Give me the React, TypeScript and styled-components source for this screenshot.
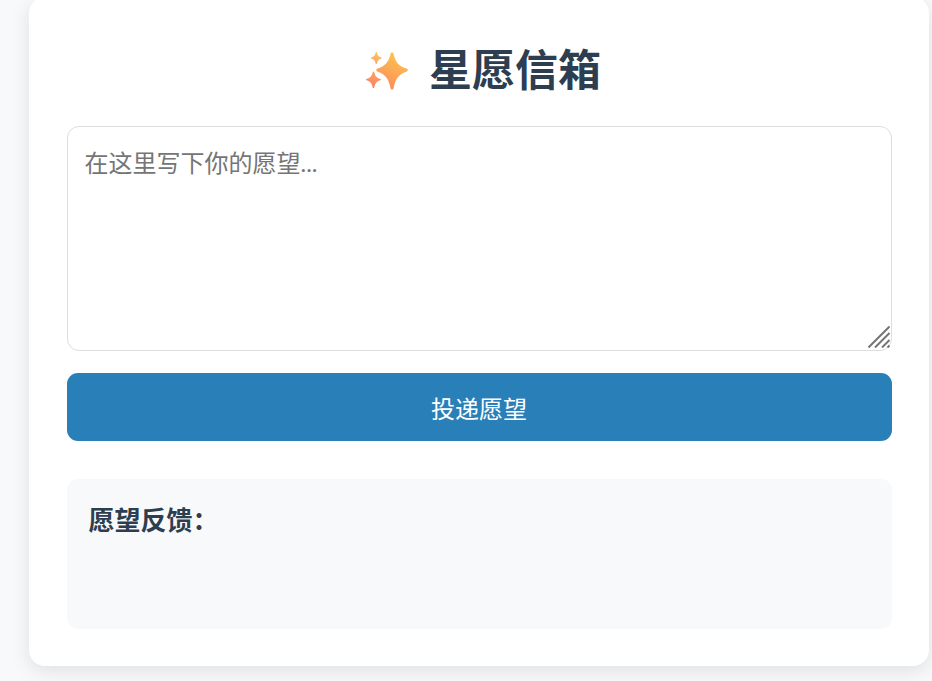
import React from "react";
import styled, { createGlobalStyle } from "styled-components";

const Global = createGlobalStyle`
  html, body { margin: 0; padding: 0; height: 100%; overflow: hidden; background: #f8f9fa; }
  body { font-family: "Liberation Sans", "Noto Sans CJK SC", sans-serif; }
`;

const Page = styled.div`
  height: 681px;
  overflow: hidden;
  padding-left: 29px;
  box-sizing: border-box;
`;

const Card = styled.main`
  width: 900px;
  height: 669px;
  margin-top: -3px;
  padding: 3px 37.5px 0;
  box-sizing: border-box;
  background: #fff;
  border-radius: 16px;
  box-shadow: 0 5px 20px rgba(0, 0, 0, 0.1);
`;

const Title = styled.h1`
  display: flex;
  align-items: center;
  justify-content: center;
  gap: 21px;
  height: 72px;
  margin: 35px 0 19px;
  padding-left: 8px;
  font-size: 43px;
  line-height: 72px;
  font-weight: 700;
  color: #2c3e50;
`;

const Sparkle = styled.svg`
  width: 43px;
  height: 39px;
  flex: none;
`;

const FieldWrap = styled.div`
  position: relative;
  height: 225px;
`;

const WishInput = styled.textarea`
  display: block;
  width: 100%;
  height: 100%;
  box-sizing: border-box;
  padding: 18px 17px;
  border: 1px solid #ddd;
  border-radius: 12px;
  resize: none;
  outline: none;
  background: #fff;
  font-family: Lato, "Noto Sans CJK SC", sans-serif;
  font-size: 24px;
  line-height: 36px;
  color: #333;
  &::placeholder { color: #757575; opacity: 1; }
`;

const Grip = styled.svg`
  position: absolute;
  right: 2px;
  bottom: 3px;
  width: 22px;
  height: 22px;
  pointer-events: none;
`;

const Submit = styled.button`
  display: block;
  width: 100%;
  height: 68px;
  margin-top: 22px;
  border: 0;
  border-radius: 11px;
  background: #2980b9;
  color: #fff;
  font-family: "Liberation Sans", "Noto Sans CJK SC", sans-serif;
  font-size: 24px;
`;

const Feedback = styled.section`
  height: 150px;
  margin-top: 38px;
  padding: 23px 22px 0;
  box-sizing: border-box;
  background: #f8f9fa;
  border-radius: 11px;
`;

const FeedbackTitle = styled.h3`
  margin: 0;
  font-size: 26px;
  line-height: 38px;
  font-weight: 700;
  color: #2c3e50;
`;

export default function App() {
  return (
    <Page>
      <Global />
      <Card>
        <Title>
          <Sparkle viewBox="0 0 46 42" aria-hidden="true">
            <defs>
              <linearGradient id="big" x1="0.7" y1="0" x2="0.3" y2="1">
                <stop offset="0" stopColor="#fdc74f" />
                <stop offset="1" stopColor="#fb8a5c" />
              </linearGradient>
              <linearGradient id="low" x1="0.7" y1="0" x2="0.3" y2="1">
                <stop offset="0" stopColor="#fda55a" />
                <stop offset="1" stopColor="#f97f6c" />
              </linearGradient>
              <linearGradient id="top" x1="0.7" y1="0" x2="0.3" y2="1">
                <stop offset="0" stopColor="#fdc55a" />
                <stop offset="1" stopColor="#fba664" />
              </linearGradient>
            </defs>
            <path fill="url(#big)" d="M29 .5c1 0 1.500.7 1.800 1.800C32.500 10 35.500 15 44.500 17.800c1 .3 1.500.9 1.500 1.700s-.5 1.400-1.500 1.700C36 24 32.500 29 30.800 38.500c-.3 1.300-.8 2-1.800 2s-1.500-.7-1.800-2C25.500 29 22 24 13.500 21.200c-1-.3-1.500-.9-1.500-1.700s.5-1.400 1.500-1.700C22 15 25.500 10 27.200 2.300c.3-1.100.8-1.800 1.800-1.800z" />
            <path fill="url(#top)" d="M12 0c.4 0 .6.3.7.7.7 3 1.800 4.300 4.700 5.200.5.1.6.4.6.600s-.2.500-.6.600c-2.900.9-4 2.300-4.700 5.200-.1.400-.3.700-.7.700s-.6-.3-.7-.7c-.7-2.900-1.800-4.300-4.700-5.200-.4-.1-.6-.4-.6-.6s.1-.5.6-.6c2.900-.9 4-2.200 4.700-5.200.1-.4.300-.7.700-.7z" />
            <path fill="url(#low)" d="M9 21c.5 0 .7.300.9.800.9 4 2.300 6 6.600 7.300.5.200.7.400.7.700s-.2.500-.7.700c-4.300 1.300-5.700 3.500-6.600 7.700-.2.500-.4.800-.9.800s-.7-.3-.9-.8c-.9-4.200-2.300-6.400-6.600-7.700-.5-.2-.7-.4-.7-.7s.2-.5.7-.7c4.300-1.300 5.700-3.300 6.600-7.300.2-.5.4-.8.900-.8z" />
          </Sparkle>
          星愿信箱
        </Title>
        <FieldWrap>
          <WishInput placeholder="在这里写下你的愿望..." />
          <Grip viewBox="0 0 22 22" aria-hidden="true" stroke="#757575" strokeWidth="2" fill="none">
            <path d="M0.500 21.500 21.500 0.500M7 21.500 21.500 7M14 21.500 21.500 14M19.500 21.500 21.500 19.500" />
          </Grip>
        </FieldWrap>
        <Submit type="button">投递愿望</Submit>
        <Feedback>
          <FeedbackTitle>愿望反馈：</FeedbackTitle>
        </Feedback>
      </Card>
    </Page>
  );
}
